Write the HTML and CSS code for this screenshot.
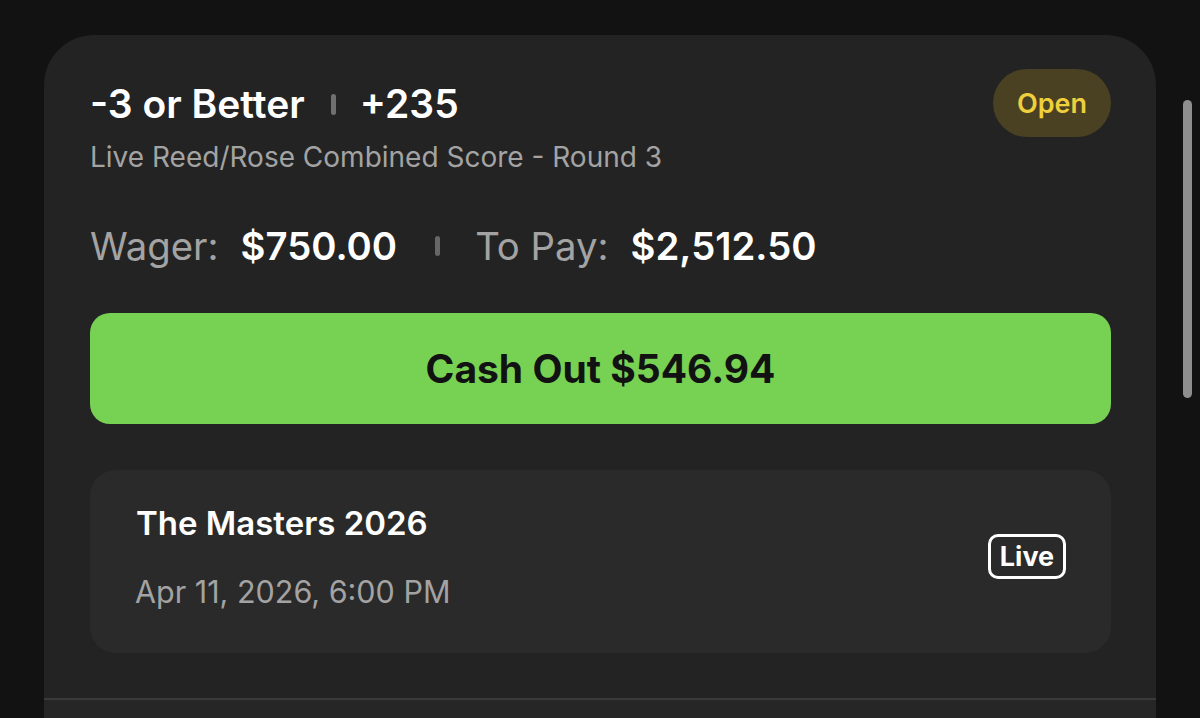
FILE: index.html
```html
<!DOCTYPE html>
<html lang="en">
<head>
<meta charset="utf-8">
<title>Bet</title>
<link rel="stylesheet" href="styles.css">
</head>
<body>
<div class="page">
  <div class="card">
    <div class="bet">
      <div class="head">
        <div class="head-text">
          <div class="title">
            <span>-3 or Better</span>
            <span class="sep"></span>
            <span>+235</span>
          </div>
          <div class="subtitle">Live Reed/Rose Combined Score - Round 3</div>
        </div>
        <div class="badge-open">Open</div>
      </div>
      <div class="amounts">
        <span class="label">Wager:</span>
        <span class="value">$750.00</span>
        <span class="sep sep-amt"></span>
        <span class="label">To Pay:</span>
        <span class="value">$2,512.50</span>
      </div>
      <button class="cashout">Cash Out $546.94</button>
      <div class="event">
        <div class="event-text">
          <div class="event-name">The Masters 2026</div>
          <div class="event-date">Apr 11, 2026, 6:00 PM</div>
        </div>
        <div class="badge-live">Live</div>
      </div>
    </div>
    <div class="next"></div>
  </div>
  <div class="scrollbar"></div>
</div>
</body>
</html>
```
FILE: styles.css
```css
* { box-sizing: border-box; }
html, body {
  margin: 0;
  height: 100%;
  background: #121212;
  overflow: hidden;
}
body {
  font-family: Inter, "Noto Sans", sans-serif;
  color: #ffffff;
}
.page {
  position: relative;
  height: 718px;
  padding: 35px 0 0 44px;
}
.card {
  width: 1112px;
  height: 760px;
  background: #232323;
  border-radius: 50px 50px 0 0;
  overflow: hidden;
  display: flex;
  flex-direction: column;
}
.bet {
  padding: 46px 45px 0 46px;
  height: 663px;
}
.head {
  display: flex;
  justify-content: space-between;
  align-items: flex-start;
}
.title {
  display: flex;
  align-items: center;
  font-size: 39px;
  line-height: 46px;
  font-weight: 600;
}
.sep {
  display: inline-block;
  width: 5px;
  height: 21px;
  border-radius: 3px;
  background: #707070;
  margin: 0 24px 0 26px;
}
.subtitle {
  margin-top: 13px;
  font-size: 28px;
  line-height: 34px;
  color: #a3a3a3;
}
.badge-open {
  margin-top: -12px;
  width: 118px;
  height: 68px;
  border-radius: 34px;
  background: #4a4122;
  color: #efcf3c;
  font-size: 27px;
  font-weight: 600;
  display: flex;
  align-items: center;
  justify-content: center;
}
.amounts {
  margin-top: 49px;
  display: flex;
  align-items: center;
  font-size: 38.3px;
  line-height: 46px;
}
.label {
  color: #a3a3a3;
  font-weight: 400;
  margin-right: 22px;
}
.value {
  font-weight: 600;
  color: #ffffff;
}
.sep-amt {
  height: 20px;
  background: #666666;
  margin: 0 35px 0 38px;
}
.cashout {
  display: block;
  margin-top: 44px;
  width: 1021px;
  height: 111px;
  border: 0;
  border-radius: 20px;
  background: #77d153;
  color: #121212;
  font-family: Inter, "Noto Sans", sans-serif;
  font-size: 39px;
  font-weight: 700;
  padding: 0;
}
.event {
  margin-top: 46px;
  width: 1021px;
  height: 183px;
  border-radius: 26px;
  background: #2a2a2a;
  display: flex;
  align-items: flex-start;
  justify-content: space-between;
  padding: 33px 45px 0 46px;
}
.event-name {
  font-size: 33px;
  line-height: 40px;
  font-weight: 600;
}
.event-date {
  margin-top: 31px;
  font-size: 30.5px;
  line-height: 36px;
  color: #a3a3a3;
  margin-left: -1px;
}
.badge-live {
  margin-top: 31px;
  width: 78px;
  height: 45px;
  border: 3px solid #ffffff;
  border-radius: 10px;
  font-size: 27px;
  font-weight: 700;
  display: flex;
  align-items: center;
  justify-content: center;
}
.next {
  flex: 1;
  border-top: 2px solid #3a3a3a;
  background: #262626;
}
.scrollbar {
  position: absolute;
  left: 1183px;
  top: 100px;
  width: 9px;
  height: 298px;
  border-radius: 5px;
  background: #8e8e8e;
}
```
